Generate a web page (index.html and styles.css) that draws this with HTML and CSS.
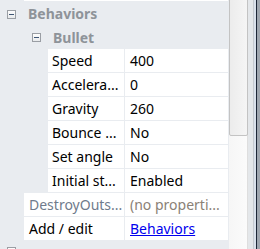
FILE: index.html
```html
<!DOCTYPE html>
<html lang="en">
<head>
  <meta charset="UTF-8" />
  <title>Properties</title>
  <link rel="stylesheet" href="styles.css">
</head>
<body>
  <div class="pane">
    <div class="grid">
      <div class="prev-row"></div>

      <div class="cat-row">
        <span class="toggle"></span>
        <span class="cat-title">Behaviors</span>
      </div>
      <div class="cat-row sub">
        <span class="toggle"></span>
        <span class="cat-title">Bullet</span>
      </div>

      <div class="prop">
        <div class="name">Speed</div>
        <div class="value">400</div>
      </div>
      <div class="prop">
        <div class="name" title="Acceleration">Accelera...</div>
        <div class="value">0</div>
      </div>
      <div class="prop">
        <div class="name">Gravity</div>
        <div class="value">260</div>
      </div>
      <div class="prop">
        <div class="name" title="Bounce off solids">Bounce ...</div>
        <div class="value">No</div>
      </div>
      <div class="prop">
        <div class="name">Set angle</div>
        <div class="value">No</div>
      </div>
      <div class="prop">
        <div class="name" title="Initial state">Initial st...</div>
        <div class="value">Enabled</div>
      </div>

      <div class="prop wide">
        <div class="name muted" title="DestroyOutsideLayout">DestroyOuts...</div>
        <div class="value faint" title="(no properties)">(no properti...</div>
      </div>
      <div class="prop wide">
        <div class="name">Add / edit</div>
        <div class="value"><a href="#">Behaviors</a></div>
      </div>

      <div class="cat-row last">
        <span class="toggle"></span>
        <span class="cat-title">Effects</span>
      </div>
    </div>

    <div class="scrollbar">
      <div class="track">
        <div class="thumb"></div>
      </div>
      <div class="edge"></div>
      <div class="line"></div>
      <div class="blue"></div>
      <div class="dark"></div>
      <div class="frame"></div>
    </div>
  </div>
</body>
</html>
```

FILE: styles.css
```css
body {
  margin: 0;
  font-family: 'Noto Sans', sans-serif;
  font-size: 14px;
  color: #000;
  background: #e9ecf0;
}
.pane {
  display: flex;
  width: 260px;
  height: 249px;
  overflow: hidden;
}
.grid {
  width: 228px;
  background: #e9ecf0;
  overflow: hidden;
}
.prev-row {
  height: 1px;
  margin-left: 24px;
  background: white;
}
.cat-row {
  display: flex;
  align-items: center;
  height: 24px;
  padding-top: 2px;
  box-sizing: border-box;
}
.cat-row.sub {
  padding-left: 25px;
  height: 23px;
}
.cat-row.last {
  align-items: flex-start;
  padding-top: 7px;
}
.toggle {
  position: relative;
  width: 9px;
  height: 9px;
  margin: 0 12px 0 7px;
  border: 1px solid #9a9ea4;
  background: linear-gradient(#fdfdfd, #e8eaec);
  box-sizing: border-box;
}
.toggle::after {
  content: '';
  position: absolute;
  left: 1px;
  top: 3px;
  width: 5px;
  height: 1px;
  background: #3f5675;
}
.cat-title {
  font-weight: bold;
  color: #8e9399;
  line-height: 16px;
}
.prop {
  display: flex;
  height: 23px;
  margin: 1px 0 0 48px;
  line-height: 23px;
}
.prop.wide {
  margin-left: 24px;
}
.name {
  width: 76px;
  padding: 0 2px 0 4px;
  box-sizing: border-box;
  background: white;
  white-space: nowrap;
  overflow: hidden;
}
.prop.wide .name {
  width: 100px;
  padding-left: 5px;
}
.value {
  flex: 1;
  margin-left: 1px;
  padding: 0 2px 0 5px;
  background: white;
  white-space: nowrap;
  overflow: hidden;
}
.muted {
  color: #6f7b8c;
}
.faint {
  color: #8a8176;
}
.value a {
  color: #0000ee;
}
.scrollbar {
  display: flex;
  width: 32px;
  height: 249px;
}
.track {
  width: 19px;
  margin-left: 1px;
  background: linear-gradient(to right, #f6f6f6, #fbfbfb);
  border-right: 1px solid #dedede;
  box-sizing: border-box;
}
.thumb {
  height: 138px;
  margin-top: -2px;
  margin-right: -1px;
  border: 1px solid #c3c3c3;
  border-radius: 0 0 2px 2px;
  background: linear-gradient(to right, #ececec, #f5f5f5);
  box-sizing: border-box;
}
.edge {
  width: 5px;
  background: #e4e7ea;
}
.line {
  width: 1px;
  background: #c5cad0;
}
.blue {
  width: 2px;
  background: #d9e1eb;
}
.dark {
  width: 1px;
  background: #1c2636;
}
.frame {
  width: 3px;
  background: #9fa7b0;
}
```
